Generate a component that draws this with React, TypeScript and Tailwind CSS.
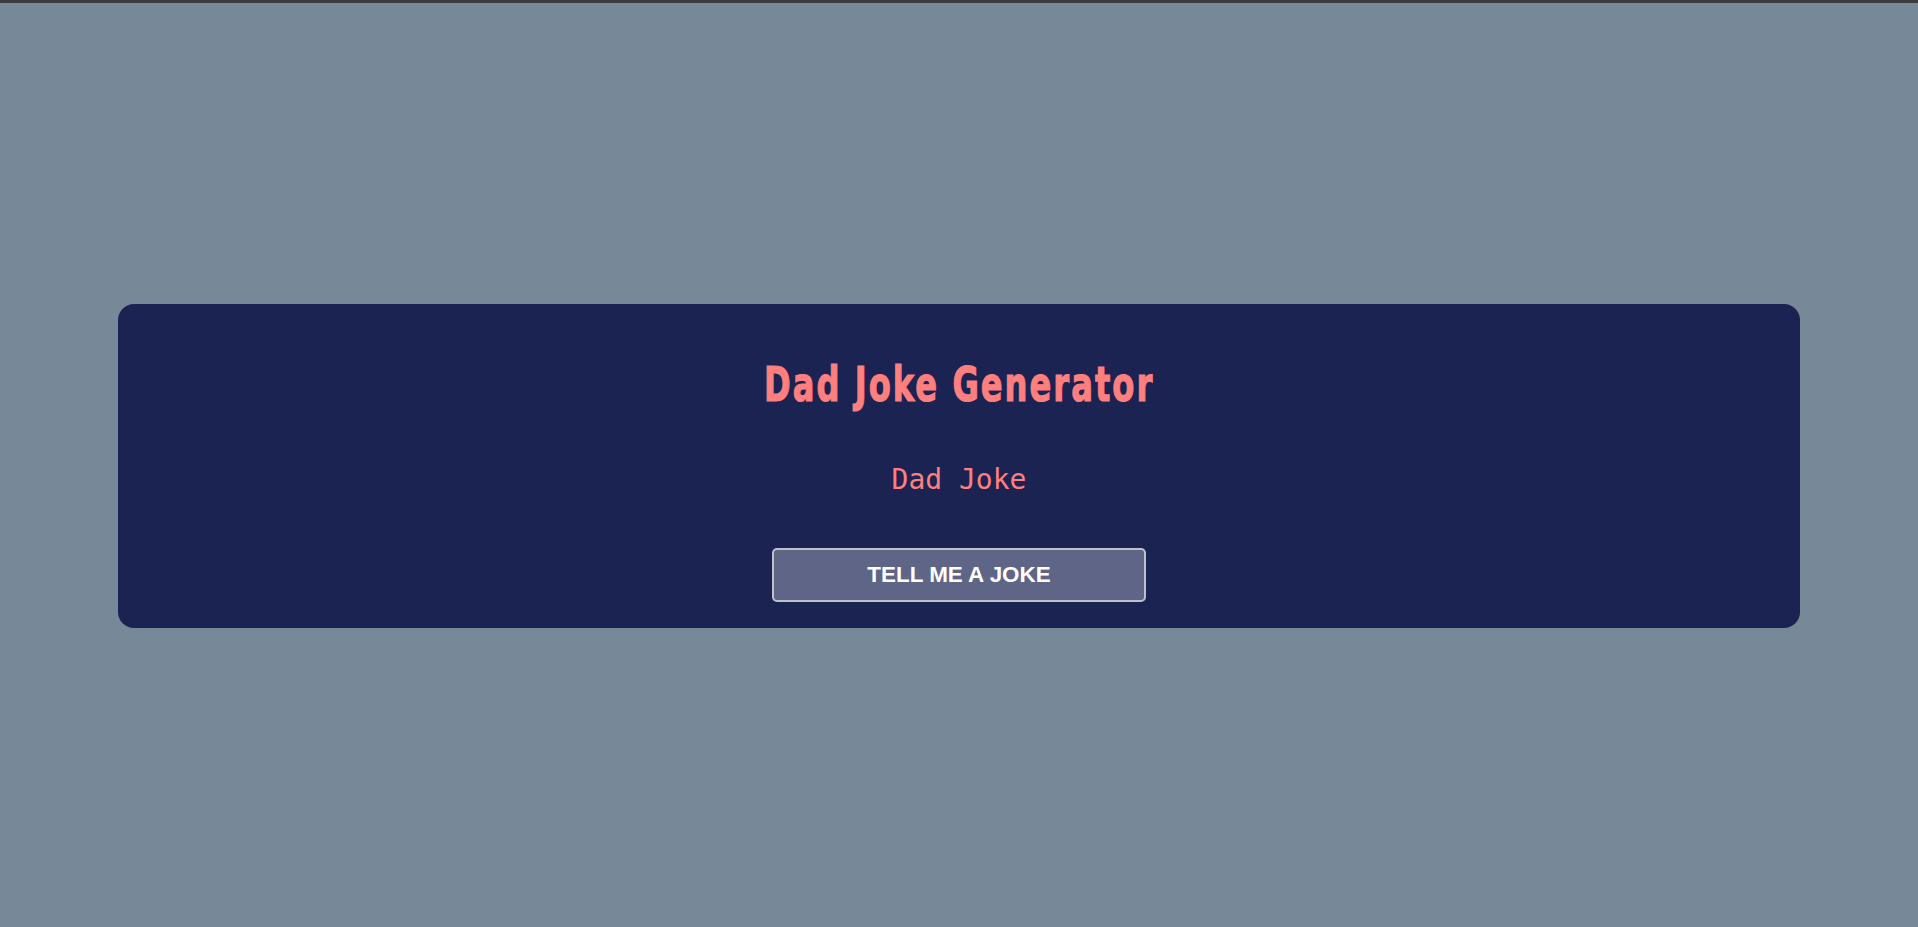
export default function App() {
  return (
    <div className="min-h-screen flex flex-col bg-[#778899]">
      <div className="h-[3px] bg-[#3b3b40]" />
      <div className="flex-1 flex items-center justify-center pt-[2px]">
        <div className="w-[1682px] h-[324px] rounded-2xl bg-[#1a2352] flex flex-col items-center">
          {/* condensed heading, no Impact available so squeeze DejaVu bold */}
          <h1 className="mt-[56px] text-[48px] leading-none font-bold tracking-[3px] scale-x-[0.67] whitespace-nowrap text-[#ff7f7f] [-webkit-text-stroke:1.2px_#ff7f7f] font-['Impact','DejaVu_Sans',sans-serif]">
            Dad Joke Generator
          </h1>
          <p className="mt-[58px] text-[28px] leading-none text-[#ff7f7f] font-['DejaVu_Sans_Mono',monospace]">
            Dad Joke
          </p>
          <button className="mt-[54px] w-[374px] h-[54px] rounded-[5px] border-2 border-white/60 bg-white/30 text-white text-[22.4px] font-bold font-['Liberation_Sans',Arial,sans-serif]">
            TELL ME A JOKE
          </button>
        </div>
      </div>
    </div>
  );
}
